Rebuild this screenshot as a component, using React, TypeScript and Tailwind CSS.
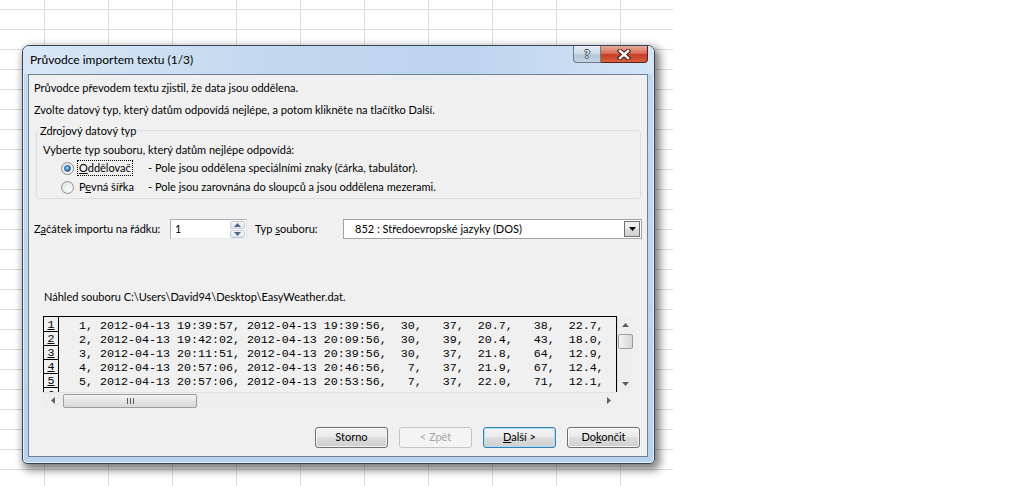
const previewRows = [
  "1, 2012-04-13 19:39:57, 2012-04-13 19:39:56,  30,   37,  20.7,   38,  22.7,    1015.3,  1013.9,",
  "2, 2012-04-13 19:42:02, 2012-04-13 20:09:56,  30,   39,  20.4,   43,  18.0,    1015.3,  1013.9,",
  "3, 2012-04-13 20:11:51, 2012-04-13 20:39:56,  30,   37,  21.8,   64,  12.9,    1015.4,  1014.0,",
  "4, 2012-04-13 20:57:06, 2012-04-13 20:46:56,   7,   37,  21.9,   67,  12.4,    1015.4,  1014.0,",
  "5, 2012-04-13 20:57:06, 2012-04-13 20:53:56,   7,   37,  22.0,   71,  12.1,    1015.4,  1014.0,",
  "6, 2012-04-13 21:05:13, 2012-04-13 21:00:56,   7,   37,  22.0,   72,  11.9,    1015.5,  1014.1,",
];

function Radio({ checked }: { checked?: boolean }) {
  return (
    <div className="w-[13px] h-[13px] shrink-0 rounded-full border border-[#8e8f8f] bg-[radial-gradient(circle_at_65%_65%,#fbfbfb,#dcdcdc)] flex items-center justify-center">
      {checked && (
        <div className="w-[7px] h-[7px] rounded-full border border-[#1d5a94] bg-[radial-gradient(circle_at_40%_35%,#a6dcfb,#2b86d2_55%,#0f4f90)]" />
      )}
    </div>
  );
}

function Arrow({ dir, color = "#5f5f5f" }: { dir: "up" | "down" | "left" | "right"; color?: string }) {
  const pts = {
    up: "0,4 3.5,0 7,4",
    down: "0,0 7,0 3.5,4",
    left: "4,0 4,7 0,3.5",
    right: "0,0 0,7 4,3.5",
  }[dir];
  const vertical = dir === "up" || dir === "down";
  return (
    <svg width={vertical ? 7 : 4} height={vertical ? 4 : 7} viewBox={vertical ? "0 0 7 4" : "0 0 4 7"}>
      <polygon points={pts} fill={color} />
    </svg>
  );
}

function WinButton({ children, disabled, focused }: { children: React.ReactNode; disabled?: boolean; focused?: boolean }) {
  if (disabled) {
    return (
      <div className="w-[73px] h-[21px] rounded-[3px] border border-[#c2c6c9] bg-[#f4f4f4] text-[#a3a3a3] flex items-center justify-center">
        {children}
      </div>
    );
  }
  return (
    <div
      className={
        focused
          ? "w-[73px] h-[21px] rounded-[3px] border border-[#3c7fb1] bg-[linear-gradient(#f3f3f3,#ececec_45%,#dddddd_50%,#d0d0d0)] shadow-[inset_0_0_0_1px_#a8e0f9] flex items-center justify-center"
          : "w-[73px] h-[21px] rounded-[3px] border border-[#707070] bg-[linear-gradient(#f2f2f2,#ebebeb_45%,#dddddd_50%,#cfcfcf)] shadow-[inset_0_0_0_1px_rgba(255,255,255,0.75)] flex items-center justify-center"
      }
    >
      {children}
    </div>
  );
}

export default function App() {
  return (
    <div className="relative w-[1010px] h-[486px] overflow-hidden bg-white text-[11px] text-black [font-family:Lato,'Liberation_Sans',sans-serif]">
      {/* excel sheet behind the dialog */}
      <div className="w-[673px] h-full bg-[linear-gradient(to_right,#dadcdd_1px,transparent_1px),linear-gradient(to_bottom,#dadcdd_1px,transparent_1px)] [background-size:64px_20px] [background-position:44px_9px]" />

      {/* dialog window */}
      <div className="absolute left-[22px] top-[45px] w-[633px] h-[419px] flex flex-col rounded-t-[7px] rounded-b-[5px] border border-[#34455a] bg-[linear-gradient(to_bottom,#c4daf1,#b8d3ee)] shadow-[inset_0_0_0_1px_rgba(255,255,255,0.65),3px_4px_9px_2px_rgba(0,0,0,0.5)]">
        <div className="h-[28px] shrink-0 flex items-start rounded-t-[6px] bg-[linear-gradient(to_right,#d8e7f6,#c2d8ef_40%,#bcd4ed_70%,#d3e5f7)]">
          <div className="h-full flex items-center pl-[7px] text-[12px]">Průvodce importem textu (1/3)</div>
          <div className="ml-auto mr-[6px] flex">
            <div className="w-[28px] h-[17px] rounded-bl-[4px] border border-t-0 border-[#6b7b90] bg-[linear-gradient(#e6eef6,#ccd9e7_50%,#b5c6d9_55%,#c4d4e4)] flex items-center justify-center">
              <span className="text-[12px] font-bold leading-none text-white [text-shadow:1px_0_#34414f,-1px_0_#34414f,0_1px_#34414f,0_-1px_#34414f]">?</span>
            </div>
            <div className="w-[47px] h-[17px] rounded-br-[4px] border border-t-0 border-l-0 border-[#5c2118] bg-[linear-gradient(#eaa898,#d8705b_45%,#c63d22_55%,#d9613f)] flex items-center justify-center">
              <svg width="16" height="11" viewBox="0 0 16 11">
                <path d="M4 2 L12 9 M12 2 L4 9" stroke="#4a1f19" strokeWidth="4.5" strokeLinecap="square" />
                <path d="M4 2 L12 9 M12 2 L4 9" stroke="#ffffff" strokeWidth="2.4" strokeLinecap="square" />
              </svg>
            </div>
          </div>
        </div>

        {/* client area */}
        <div className="flex-1 ml-[5px] mr-[6px] mb-[6px] border border-[#6e8096] bg-[#f0f0f0] flex flex-col pl-[5px] pt-[2px]">
          <div className="h-[22px] flex items-center">Průvodce převodem textu zjistil, že data jsou oddělena.</div>
          <div className="h-[22px] flex items-center">Zvolte datový typ, který datům odpovídá nejlépe, a potom klikněte na tlačítko Další.</div>

          <fieldset className="mt-[2px] ml-[2px] w-[605px] rounded-[3px] border border-[#d5dfe5] pb-[2px]">
            <legend className="ml-[2px] px-[1px] leading-[15px]">Zdrojový datový typ</legend>
            <div className="mt-[3px] h-[18px] flex items-center pl-[6px]">Vyberte typ souboru, který datům nejlépe odpovídá:</div>
            <div className="h-[18px] flex items-center pl-[24px]">
              <Radio checked />
              <div className="ml-[2px] w-[72px] flex">
                <span className="ml-[1px] px-[1px] border border-dotted border-black leading-[14px]">
                  <u>O</u>ddělovač
                </span>
              </div>
              <span>- Pole jsou oddělena speciálními znaky (čárka, tabulátor).</span>
            </div>
            <div className="mt-[1px] h-[18px] flex items-center pl-[24px]">
              <Radio />
              <div className="ml-[2px] w-[72px] flex">
                <span className="ml-[1px] px-[1px] border border-transparent leading-[14px]">
                  P<u>e</u>vná šířka
                </span>
              </div>
              <span>- Pole jsou zarovnána do sloupců a jsou oddělena mezerami.</span>
            </div>
          </fieldset>

          <div className="mt-[20px] h-[20px] flex items-center">
            <div className="w-[136px] whitespace-nowrap">
              Z<u>a</u>čátek importu na řádku:
            </div>
            <div className="w-[77px] h-[20px] border border-[#abadb3] border-b-[#e3e9ef] border-r-[#dbdfe6] bg-white flex items-center">
              <span className="pl-[4px]">1</span>
              <div className="ml-auto mr-[1px] w-[15px] h-[17px] flex flex-col gap-px">
                <div className="flex-1 rounded-[2px] border border-[#c3cad4] bg-[linear-gradient(#f5f7f9,#dfe5ec)] flex items-center justify-center">
                  <Arrow dir="up" color="#4f6489" />
                </div>
                <div className="flex-1 rounded-[2px] border border-[#c3cad4] bg-[linear-gradient(#f5f7f9,#dfe5ec)] flex items-center justify-center">
                  <Arrow dir="down" color="#4f6489" />
                </div>
              </div>
            </div>
            <div className="ml-[8px] w-[88px] whitespace-nowrap">
              Typ <u>s</u>ouboru:
            </div>
            <div className="w-[299px] h-[20px] border border-[#a2a2a2] bg-white flex items-center">
              <span className="pl-[11px]">852 : Středoevropské jazyky (DOS)</span>
              <div className="ml-auto mr-px w-[16px] h-[16px] border border-[#707070] bg-[linear-gradient(#f2f2f2,#ebebeb_45%,#dddddd_50%,#cfcfcf)] flex items-center justify-center">
                <Arrow dir="down" color="#000000" />
              </div>
            </div>
          </div>

          <div className="mt-[49px] ml-[10px] h-[18px] flex items-center">Náhled souboru C:\Users\David94\Desktop\EasyWeather.dat.</div>

          <div className="mt-[10px] ml-[9px] w-[590px] h-[92px] grid grid-cols-[574px_16px] grid-rows-[76px_16px]">
            <div className="border-t border-l border-r border-black overflow-hidden flex text-[11.67px] [font-family:'Liberation_Mono',monospace]">
              <div className="w-[15px] shrink-0 border-r border-black pt-px">
                {previewRows.map((_, i) => (
                  <div key={i} className="h-[14px] border-b border-black leading-[14px] text-center underline">
                    {i + 1}
                  </div>
                ))}
              </div>
              <div className="pl-[20px] pt-[2px]">
                {previewRows.map((r, i) => (
                  <div key={i} className="h-[14px] leading-[14px] whitespace-pre">
                    {r}
                  </div>
                ))}
              </div>
            </div>

            <div className="bg-[#eeeeee] border-l border-[#e2e2e2] flex flex-col items-center">
              <div className="h-[17px] w-full flex items-center justify-center">
                <Arrow dir="up" />
              </div>
              <div className="mt-px w-[15px] h-[15px] rounded-[2px] border border-[#9c9c9c] bg-[linear-gradient(to_right,#f4f4f4,#e4e4e4_50%,#d6d6d6)]" />
              <div className="mt-auto h-[17px] w-full flex items-center justify-center">
                <Arrow dir="down" />
              </div>
            </div>

            <div className="bg-[#eeeeee] border-t border-[#e2e2e2] flex items-center pl-px">
              <div className="w-[17px] flex items-center justify-center">
                <Arrow dir="left" />
              </div>
              <div className="ml-[2px] w-[134px] h-[14px] rounded-[2px] border border-[#9c9c9c] bg-[linear-gradient(#f4f4f4,#e5e5e5_50%,#d7d7d7)] flex items-center justify-center">
                <svg width="7" height="6" viewBox="0 0 7 6">
                  <path d="M0.5 0 V6 M3.5 0 V6 M6.5 0 V6" stroke="#555555" strokeWidth="1" />
                </svg>
              </div>
              <div className="ml-auto w-[17px] flex items-center justify-center">
                <Arrow dir="right" />
              </div>
            </div>
            <div className="bg-[#f0f0f0]" />
          </div>

          <div className="mt-[19px] pr-[7px] flex justify-end gap-[11px]">
            <WinButton>Storno</WinButton>
            <WinButton disabled>&lt; Zpět</WinButton>
            <WinButton focused>
              <span>
                <u>D</u>alší &gt;
              </span>
            </WinButton>
            <WinButton>
              <span>
                Do<u>k</u>ončit
              </span>
            </WinButton>
          </div>
        </div>
      </div>
    </div>
  );
}
